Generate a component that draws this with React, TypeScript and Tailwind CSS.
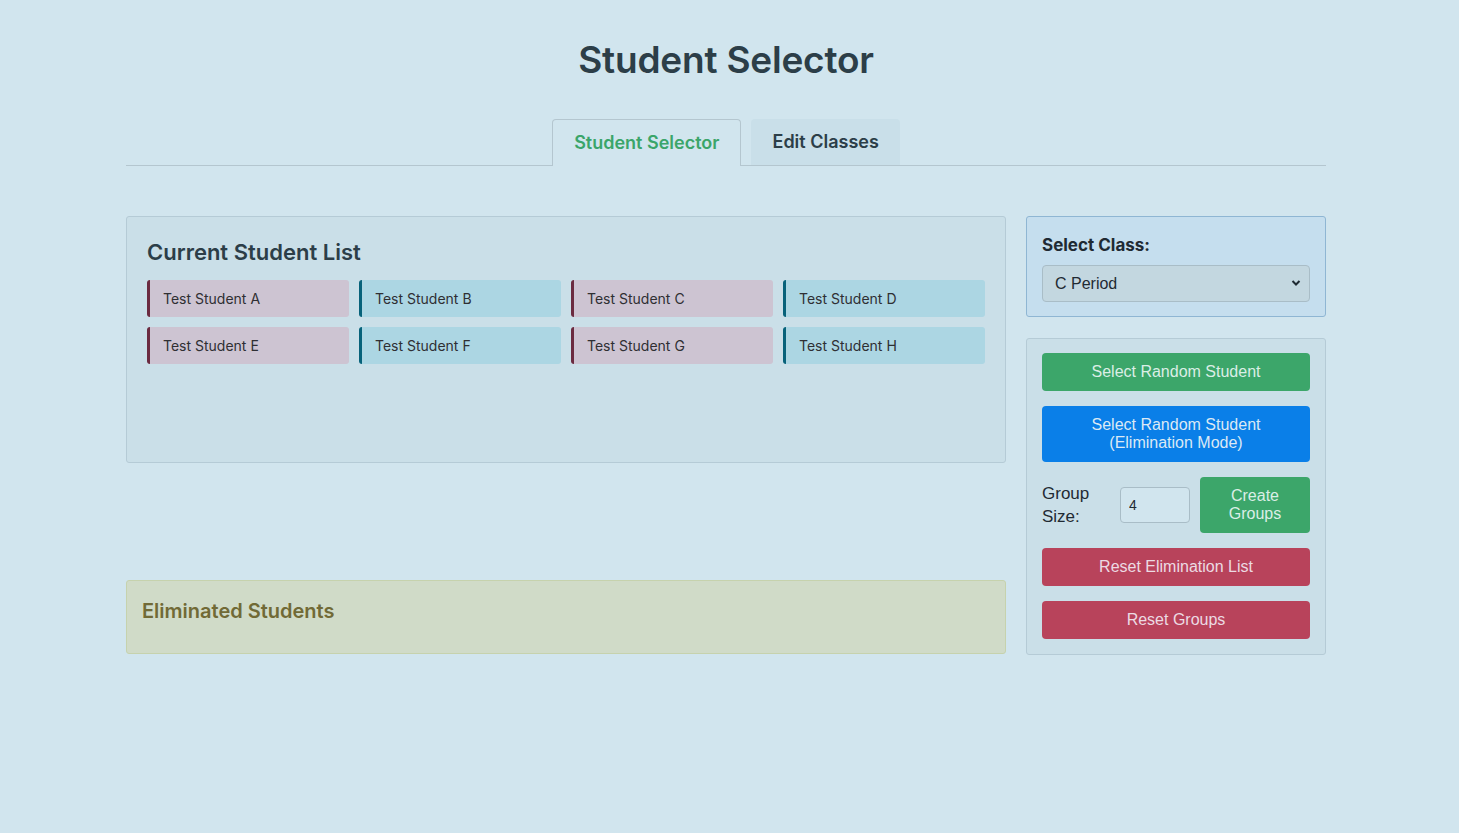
import React from 'react';

const students = [
  { name: 'Test Student A', tone: 'pink' },
  { name: 'Test Student B', tone: 'blue' },
  { name: 'Test Student C', tone: 'pink' },
  { name: 'Test Student D', tone: 'blue' },
  { name: 'Test Student E', tone: 'pink' },
  { name: 'Test Student F', tone: 'blue' },
  { name: 'Test Student G', tone: 'pink' },
  { name: 'Test Student H', tone: 'blue' },
];

const head = { fontFamily: 'Inter, "Noto Sans", sans-serif' };
const sys = { fontFamily: '"Liberation Sans", Arial, sans-serif' };

export default function App() {
  return (
    <div className="min-h-[833px] bg-[#d1e5ee] text-[#2c3e48]" style={head}>
      <div className="ml-[126px] w-[1200px] pt-[38px]">
        <h1 className="text-center text-[37px] font-semibold leading-[44px] tracking-[-0.2px] text-[#2c3e48]">
          Student Selector
        </h1>

        {/* tabs */}
        <div className="mt-[37px] flex justify-center gap-[10px] border-b border-[#b4c6cf]">
          <div className="-mb-px rounded-t-[4px] border border-b-0 border-[#b4c6cf] bg-[#d1e5ee] px-[21px] pt-[11px] pb-[11px] text-[18px] font-semibold leading-[24px] text-[#3ba56a]">
            Student Selector
          </div>
          <div className="rounded-t-[4px] bg-[#c9dfe9] px-[21px] pt-[11px] pb-[11px] text-[18px] font-semibold leading-[24px] text-[#2c3e48]">
            Edit Classes
          </div>
        </div>

        <div className="mt-[50px] grid grid-cols-[880px_300px] gap-[20px]">
          {/* left column */}
          <div>
            <div className="h-[247px] rounded-[3px] border border-[#b5cbd6] bg-[#cadfe8] px-[20px] pt-[20px]">
              <h2 className="text-[22px] font-semibold leading-[30px] text-[#2c3e48]">Current Student List</h2>
              <div className="mt-[13px] grid grid-cols-4 gap-x-[10px] gap-y-[10px]">
                {students.map((s) => (
                  <div
                    key={s.name}
                    className={
                      s.tone === 'pink'
                        ? 'flex h-[37px] items-center rounded-[3px] border-l-[3px] border-[#6b2b40] bg-[#cdc4d2] pl-[13px] text-[14px] text-[#2f2f33]'
                        : 'flex h-[37px] items-center rounded-[3px] border-l-[3px] border-[#07627a] bg-[#acd6e3] pl-[13px] text-[14px] text-[#2f2f33]'
                    }
                  >
                    {s.name}
                  </div>
                ))}
              </div>
            </div>

            <div className="mt-[117px] h-[74px] rounded-[3px] border border-[#c6d2ad] bg-[#d0dbc8] px-[15px] pt-[16px]">
              <h2 className="text-[20px] font-semibold leading-[28px] text-[#716a36]">Eliminated Students</h2>
            </div>
          </div>

          {/* right column */}
          <div className="flex flex-col gap-[21px]">
            <div className="rounded-[3px] border border-[#8fb6d3] bg-[#c5deee] px-[15px] pt-[17px] pb-[14px]">
              <label className="block text-[17px] font-bold leading-[22px] text-[#1f2a33]">Select Class:</label>
              <div className="relative mt-[9px]" style={sys}>
                <select
                  defaultValue="C Period"
                  className="h-[37px] w-full appearance-none rounded-[4px] border border-[#a9bdc7] bg-[#c3d7e0] pl-[12px] text-[16px] text-[#1f2a33] outline-none"
                >
                  <option>A Period</option>
                  <option>B Period</option>
                  <option>C Period</option>
                </select>
                <svg
                  className="pointer-events-none absolute right-[9px] top-[14px]"
                  width="10"
                  height="8"
                  viewBox="0 0 10 8"
                >
                  <path d="M1.5 2 L5 5.5 L8.5 2" stroke="#1f2a33" strokeWidth="2" fill="none" />
                </svg>
              </div>
            </div>

            <div className="flex h-[317px] flex-col rounded-[3px] border border-[#b5cbd6] bg-[#cadfe8] px-[15px] pt-[14px]" style={sys}>
              <button className="h-[38px] rounded-[4px] bg-[#3ca66a] text-[16px] text-[#dbeee6]">Select Random Student</button>
              <button className="mt-[15px] h-[56px] rounded-[4px] bg-[#0a7fe8] text-[16px] leading-[18px] text-[#dbe9f5]">
                Select Random Student
                <br />
                (Elimination Mode)
              </button>
              <div className="mt-[15px] flex items-center">
                <span className="w-[78px] text-[17px] leading-[23px] text-[#1f2a33]">
                  Group
                  <br />
                  Size:
                </span>
                <input
                  defaultValue="4"
                  className="h-[36px] w-[70px] rounded-[4px] border border-[#a9bdc7] bg-[#d1e5ee] pl-[8px] text-[14px] text-[#1f2a33] outline-none"
                />
                <button className="ml-auto h-[56px] w-[110px] rounded-[4px] bg-[#3ca66a] text-[16px] leading-[18px] text-[#dbeee6]">
                  Create
                  <br />
                  Groups
                </button>
              </div>
              <button className="mt-[15px] h-[38px] rounded-[4px] bg-[#b8435b] text-[16px] text-[#ecdbe3]">Reset Elimination List</button>
              <button className="mt-[15px] h-[38px] rounded-[4px] bg-[#b8435b] text-[16px] text-[#ecdbe3]">Reset Groups</button>
            </div>
          </div>
        </div>
      </div>
    </div>
  );
}
